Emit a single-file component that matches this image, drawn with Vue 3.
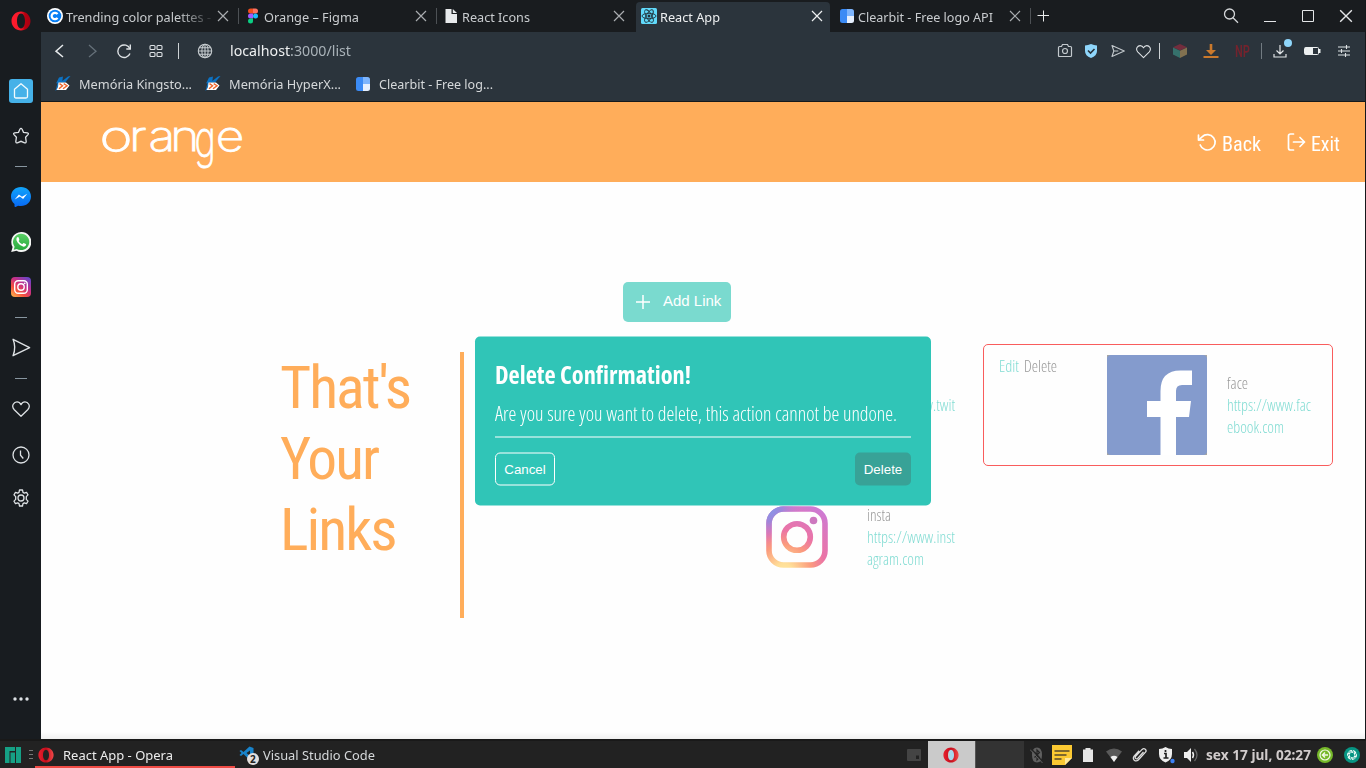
<script setup>
const tabs = [
  { title: 'Trending color palettes -', icon: 'coolors', w: 145, fade: true },
  { title: 'Orange – Figma', icon: 'figma', w: 95 },
  { title: 'React Icons', icon: 'page', w: 68 },
  { title: 'React App', icon: 'react', w: 60, active: true },
  { title: 'Clearbit - Free logo API', icon: 'clearbit', w: 135 },
]
const bookmarks = [
  { title: 'Memória Kingsto...', icon: 'kabum', w: 113 },
  { title: 'Memória HyperX...', icon: 'kabum', w: 112 },
  { title: 'Clearbit - Free log...', icon: 'clearbit', w: 114 },
]
const sidebar = [
  ['opera', 20, 42], ['', 0, 27], ['home', 24, 44], ['star', 18, 46], ['dash', 12, 14],
  ['messenger', 20, 48], ['whatsapp', 20, 42], ['instagram', 20, 47], ['dash', 12, 14],
  ['send', 19, 47], ['dash', 12, 14], ['heart', 18, 47], ['clock', 18, 45], ['gear', 18, 42],
  ['', 0, 158], ['dots', 18, 44],
]

// Scales a line of text horizontally so that it takes the given width.
const vFit = {
  mounted(el, { value }) {
    if (!value) return
    const natural = el.getBoundingClientRect().width
    el.style.transform = `scaleX(${value / natural})`
    el.style.marginRight = `${value - natural}px`
  },
}
</script>

<template>
  <div class="screen">
    <svg class="defs" width="0" height="0">
      <defs>
        <linearGradient id="opera-g" x1="0" x2="1"><stop offset="0" stop-color="#ff1b2d" /><stop offset=".5" stop-color="#f5192b" /><stop offset=".7" stop-color="#b8000f" /><stop offset="1" stop-color="#a70014" /></linearGradient>
        <linearGradient id="opera-t" x1="0" x2="1"><stop offset="0" stop-color="#e8202e" /><stop offset=".5" stop-color="#c50c1b" /><stop offset="1" stop-color="#ef4a4a" /></linearGradient>
        <linearGradient id="blue-g" x1="0" y1="0" x2="0" y2="1"><stop offset="0" stop-color="#12a5fa" /><stop offset="1" stop-color="#0768f5" /></linearGradient>
        <linearGradient id="wa-g" x1="0" y1="0" x2="0" y2="1"><stop offset="0" stop-color="#5bd066" /><stop offset="1" stop-color="#27a93c" /></linearGradient>
        <linearGradient id="ig-g" x1="0" y1="1" x2=".8" y2="0"><stop offset="0" stop-color="#fdc04f" /><stop offset=".35" stop-color="#f5513f" /><stop offset=".65" stop-color="#c62f88" /><stop offset="1" stop-color="#6b45c6" /></linearGradient>
        <radialGradient id="ig-page" gradientUnits="userSpaceOnUse" cx="18" cy="66" r="72"><stop offset="0" stop-color="#ffe6a0" /><stop offset=".12" stop-color="#ffdf98" /><stop offset=".38" stop-color="#fb9b7d" /><stop offset=".58" stop-color="#eb74a6" /><stop offset="1" stop-color="#cd7ad4" /></radialGradient>
        <radialGradient id="ig-blue" gradientUnits="userSpaceOnUse" cx="2" cy="2" r="34"><stop offset="0" stop-color="#7f9aec" /><stop offset=".4" stop-color="#9489e0" stop-opacity=".85" /><stop offset="1" stop-color="#cd7ad4" stop-opacity="0" /></radialGradient>
      </defs>
      <symbol id="opera" viewBox="0 0 20 20"><path fill="url(#opera-g)" fill-rule="evenodd" d="M10 .5c5.3 0 9.5 4.2 9.5 9.5s-4.200 9.500-9.500 9.500S.5 15.300.5 10 4.700.5 10 .5zm0 2.100c-2.500 0-4 3.300-4 7.400s1.500 7.400 4 7.400 4-3.300 4-7.400-1.500-7.400-4-7.400z" /></symbol>
      <symbol id="opera-task" viewBox="0 0 20 20"><path fill="url(#opera-t)" fill-rule="evenodd" d="M10 .5c5.300 0 9.500 4.200 9.500 9.500s-4.200 9.500-9.500 9.500S.5 15.300.5 10 4.700.5 10 .5zm0 2.800c-2.300 0-3.800 2.800-3.800 6.700s1.500 6.700 3.800 6.700 3.800-2.800 3.800-6.700S12.300 3.300 10 3.300z" /></symbol>
      <symbol id="home" viewBox="0 0 24 24"><rect width="24" height="24" rx="3" fill="#45b1e8" /><path d="M5.500 10.300 12 4.700l6.500 5.600v7.200q0 1.500-1.500 1.500H7q-1.500 0-1.500-1.500z" fill="none" stroke="#f2fafd" stroke-width="1.300" stroke-linejoin="round" /></symbol>
      <symbol id="star" viewBox="0 0 18 18"><path d="M9 1.300q.7 0 1 .8l1.500 3.200 3.900.6q1.700.4.600 1.700l-2.400 2.700.6 4.300q0 1.800-1.600 1.200L9 14.300l-3.600 1.500q-1.600.6-1.600-1.200l.6-4.300L2 7.600Q.9 6.300 2.600 5.900l3.900-.6L8 2.100q.3-.8 1-.8z" fill="none" stroke="#dde1e4" stroke-width="1.300" /></symbol>
      <symbol id="dash" viewBox="0 0 12 2"><path d="M0 1.500h12" stroke="#8896a0" /></symbol>
      <symbol id="messenger" viewBox="0 0 20 20"><path fill="url(#blue-g)" d="M10 0c5.700 0 10 4 10 9.600s-4.300 9.500-10 9.500q-1.500 0-2.900-.4L4.500 20q-1 .1-1-1v-1.900C1.200 15.200 0 12.700 0 9.600 0 4 4.300 0 10 0z" /><path fill="#fff" d="m3.700 12.500 4.200-5.100 3.100 2.300 5.200-3-4.100 5.200-3.200-2.300z" /></symbol>
      <symbol id="whatsapp" viewBox="0 0 20 20"><path fill="#f4f6f4" d="M10 0a10 10 0 1 1-4.500 18.700L.2 20l1.400-5A10 10 0 0 1 10 0z" /><path fill="url(#wa-g)" d="M10 1.700a8.200 8.200 0 1 1-4.200 15.200l-3 .8.800-3A8.200 8.200 0 0 1 10 1.700z" /><path fill="#fff" d="M7 5q-.8 0-1.400 1-1 2 1 4.500 2.400 3.500 5.900 4.300 2 0 2.600-1.800.2-.8-.2-1l-2.200-1q-.4 0-1.200 1.100-.3.200-.7 0Q8.600 11 7.600 9q.9-1 .7-1.500L7.500 5.300Q7.400 5 7 5z" /></symbol>
      <symbol id="instagram" viewBox="0 0 20 20"><rect width="20" height="20" rx="4" fill="url(#ig-g)" /><rect x="3.700" y="3.700" width="12.600" height="12.600" rx="3.500" fill="none" stroke="#fff" stroke-width="1.400" /><circle cx="10" cy="10" r="3.200" fill="none" stroke="#fff" stroke-width="1.400" /><circle cx="13.700" cy="6.300" r=".9" fill="#fff" /></symbol>
      <symbol id="send" viewBox="0 0 18 18"><path d="m1 1.200 15.700 7.900L1 16.800Q4.200 9 1 1.200z" fill="none" stroke="#dde1e4" stroke-width="1.300" stroke-linejoin="round" /></symbol>
      <symbol id="heart" viewBox="0 0 18 18"><path d="M9 16.300 2.300 9.700C-1.400 5.600 2.300 1.900 5 1.900q2.600 0 4 2.700 1.400-2.700 4-2.700c2.700 0 6.400 3.700 2.700 7.800z" fill="none" stroke="#dde1e4" stroke-width="1.300" stroke-linejoin="round" /></symbol>
      <symbol id="clock" viewBox="0 0 18 18"><g fill="none" stroke="#dde1e4" stroke-width="1.300"><circle cx="9" cy="9" r="8" /><path d="M8.500 4.500V9.200l2.800 3.300" /></g></symbol>
      <symbol id="gear" viewBox="0 0 18 18"><g fill="none" stroke="#dde1e4" stroke-width="1.300" stroke-linejoin="round"><circle cx="9" cy="9" r="3" /><path d="m7.500 1 3 0 .5 2.400 1.300.7 2.200-.8L16 5.900l-1.700 1.700v2.800l1.700 1.700-1.500 2.600-2.200-.8-1.300.7-.5 2.400h-3L7 14.600l-1.300-.7-2.200.8L2 12.100l1.700-1.700V7.600L2 5.900l1.500-2.600 2.200.8L7 3.400z" /></g></symbol>
      <symbol id="dots" viewBox="0 0 18 18"><g fill="#dde1e4"><circle cx="3" cy="9" r="1.700" /><circle cx="9" cy="9" r="1.700" /><circle cx="15" cy="9" r="1.700" /></g></symbol>
      <symbol id="coolors" viewBox="0 0 16 16"><circle cx="8" cy="8" r="8" fill="#fff" /><circle cx="8" cy="8" r="6.300" fill="#087ff5" /><path d="M10.500 9.800a3.200 3.200 0 1 1 0-3.600" stroke="#fff" stroke-width="2.200" fill="none" /></symbol>
      <symbol id="figma" viewBox="0 0 16 16"><path fill="#f24e1e" d="M5.500.5H8v5H5.500a2.500 2.500 0 0 1 0-5z" /><path fill="#ff7262" d="M8 .5h2.500a2.500 2.500 0 0 1 0 5H8z" /><path fill="#a259ff" d="M5.500 5.500H8v5H5.500a2.500 2.500 0 0 1 0-5z" /><circle cx="10.500" cy="8" r="2.500" fill="#1abcfe" /><path fill="#0acf83" d="M5.500 10.500H8V13a2.500 2.500 0 1 1-2.500-2.500z" /></symbol>
      <symbol id="page" viewBox="0 0 16 16"><path fill="#e8eaec" d="M2.500 1h6v5H14v9H2.500zM9.800 1 14 5H9.800z" /></symbol>
      <symbol id="react" viewBox="0 0 16 16"><rect width="16" height="16" rx="1.500" fill="#61dafb" /><g fill="none" stroke="#20313b" stroke-width=".9"><ellipse cx="8" cy="8" rx="7" ry="2.700" /><ellipse cx="8" cy="8" rx="7" ry="2.700" transform="rotate(60 8 8)" /><ellipse cx="8" cy="8" rx="7" ry="2.700" transform="rotate(120 8 8)" /></g><circle cx="8" cy="8" r="1.500" fill="#20313b" /></symbol>
      <symbol id="clearbit" viewBox="0 0 16 16"><path fill="#3b8bf5" d="M8 1v14H3.500Q1 15 1 12.500v-9Q1 1 3.500 1z" /><path fill="#7db5fd" d="M8 1h4.500Q15 1 15 3.500V8H8z" /><path fill="#e6f0fe" d="M8 8h7v4.500q0 2.500-2.500 2.500H8z" /></symbol>
      <symbol id="kabum" viewBox="0 0 16 16"><path fill="#0c72c4" d="M4 1.500 8 .5 7.300 5 13 .5l2.500-.5L10 6.500H4.500L2 13.500.5 15l2-8L1 7.500z" /><path fill="#fff" d="M3.500 6.500h7.500l3.500 3-3.500 4.500H1.500L3 11z" /><path d="m4.500 7.700 3 2-3.500 3M8.700 7.700l3.300 2-4 3" fill="none" stroke="#ef6428" stroke-width="1.400" /></symbol>
      <symbol id="x" viewBox="0 0 12 12"><path d="m1 1 10 10M11 1 1 11" stroke="currentColor" stroke-width="1.200" /></symbol>
    </svg>

    <div class="upper">
      <nav class="side">
        <div v-for="(s, i) in sidebar" :key="i" class="slot" :style="{ height: s[2] + 'px' }">
          <svg v-if="s[0]" :width="s[1]" :height="s[0] === 'dash' ? 2 : s[1]"><use :href="'#' + s[0]" /></svg>
        </div>
      </nav>

      <div class="browser">
        <div class="tabbar">
          <div v-for="t in tabs" :key="t.title" class="tab" :class="{ active: t.active }">
            <svg width="16" height="16"><use :href="'#' + t.icon" /></svg>
            <div class="tab-title" :class="{ fade: t.fade }"><span v-fit="t.w" class="fit">{{ t.title }}</span></div>
            <svg class="close" width="12" height="12"><use href="#x" /></svg>
          </div>
          <svg class="plus" width="12" height="12" viewBox="0 0 12 12"><path d="M6.500 .5v11M.5 5.500h12" stroke="#e9ebec" /></svg>
          <div class="window">
            <svg width="16" height="16" viewBox="0 0 16 16"><g fill="none" stroke="#d5d8da" stroke-width="1.300"><circle cx="6.500" cy="6" r="5" /><path d="m10 9.800 5 5" /></g></svg>
            <svg width="12" height="14" viewBox="0 0 12 14"><path d="M0 12.500h12" stroke="#e4e6e8" /></svg>
            <svg width="12" height="12" viewBox="0 0 12 12"><path d="M.5.5h11v11H.5z" fill="none" stroke="#e4e6e8" /></svg>
            <svg class="quit" width="14" height="14"><use href="#x" /></svg>
          </div>
        </div>

        <div class="toolbar">
          <div class="tools-left">
            <svg width="16" height="16" viewBox="0 0 16 16"><path d="m11 2-7 6.200L11 14" fill="none" stroke="#e6e9eb" stroke-width="1.500" /></svg>
            <svg width="16" height="16" viewBox="0 0 16 16"><path d="m5 2 7 6.200L5 14" fill="none" stroke="#657079" stroke-width="1.300" /></svg>
            <svg width="16" height="16" viewBox="0 0 16 16"><g fill="none" stroke="#dde1e4" stroke-width="1.400"><path d="M14 6A6.300 6.300 0 1 0 14 10.500" /><path d="M14.300 1.500V6h-4" /></g></svg>
            <svg width="16" height="16" viewBox="0 0 16 16"><g fill="none" stroke="#dde1e4" stroke-width="1.100"><rect x="2" y="2.500" width="5" height="4" rx="1" /><rect x="9" y="2.500" width="5" height="4" rx="1" /><rect x="2" y="9.500" width="5" height="4" rx="1" /><rect x="9" y="9.500" width="5" height="4" rx="1" /></g></svg>
            <i class="bar"></i>
            <svg width="16" height="16" viewBox="0 0 16 16"><g fill="none" stroke="#c6cccf" stroke-width="1.100"><circle cx="8" cy="8" r="6.700" /><ellipse cx="8" cy="8" rx="3.100" ry="6.700" /><path d="M8 1.300v13.400M1.300 8h13.400M2.200 4.800h11.600M2.200 11.200h11.600" /></g></svg>
          </div>
          <div class="url"><span v-fit="121" class="fit">localhost<em>:3000/list</em></span></div>
          <div class="tools-right">
            <svg width="16" height="16" viewBox="0 0 16 16"><g fill="none" stroke="#c3c9cd" stroke-width="1.200"><path d="M2.500 3.500h2l1-2h5l1 2h2q1 0 1 1v8q0 1-1 1h-11q-1 0-1-1v-8q0-1 1-1z" /><circle cx="8" cy="8" r="2.500" /></g></svg>
            <svg width="16" height="16" viewBox="0 0 16 16"><path fill="#8fd6fb" d="M8 1q3 1.300 6 1.500v5.500q0 5-6 7-6-2-6-7V2.500Q5 2.300 8 1z" /><path d="m5 7.500 2.500 2.500L11.500 6" fill="none" stroke="#283139" stroke-width="1.600" /></svg>
            <svg width="14" height="14" viewBox="0 0 14 14"><path d="M1 1.500 13.300 7 1 12.500 2.800 7zM2.800 7h4.500" fill="none" stroke="#c3c9cd" stroke-width="1.100" stroke-linejoin="round" /></svg>
            <svg width="15" height="15"><use href="#heart" /></svg>
            <i class="bar"></i>
            <svg width="16" height="16" viewBox="0 0 16 16"><path fill="#732d3d" d="m8 1 7 3.300-7 3.200-7-3.200z" /><path fill="#36716c" d="m1 4.500 7 3.200V15l-7-3.500z" /><path fill="#817150" d="m15 4.500-7 3.200V15l7-3.500z" /></svg>
            <svg width="16" height="16" viewBox="0 0 16 16"><path fill="#ca792c" d="M6.700 1h2.600v6H13l-5 5-5-5h3.700zM.5 13h15v2H.5z" /></svg>
            <span class="np"><span v-fit="15" class="fit">NP</span></span>
            <i class="bar dim"></i>
            <span class="download"><svg width="16" height="16" viewBox="0 0 16 16"><path d="M8 2v9M4.500 7.500 8 11l3.500-3.500M2 11v3h12v-3" fill="none" stroke="#e1e5e7" stroke-width="1.200" /></svg><b></b></span>
            <svg width="17" height="10" viewBox="0 0 17 10"><path d="M1.500 1.500h12q1 0 1 1v5q0 1-1 1h-12q-1 0-1-1v-5q0-1 1-1z" fill="none" stroke="#eceff0" /><path fill="#eceff0" d="M1 1.500h8v7H1zM15 3h1.500v4H15z" /></svg>
            <svg width="14" height="14" viewBox="0 0 14 14"><path d="M1 3h12M1 7h12M1 11h12M9.500 1v4M4.500 5v4M8.500 9v4" stroke="#dce1e3" stroke-width="1.100" /></svg>
          </div>
        </div>

        <div class="bookmarks">
          <div v-for="b in bookmarks" :key="b.title" class="bookmark">
            <svg width="16" height="16"><use :href="'#' + b.icon" /></svg>
            <span v-fit="b.w" class="fit">{{ b.title }}</span>
          </div>
        </div>

        <main class="page">
          <header class="header">
            <svg class="brand" width="150" height="70" viewBox="0 0 150 70">
              <text transform="translate(5.500 42) scale(1.180 1)"><tspan textLength="28" lengthAdjust="spacingAndGlyphs">o</tspan><tspan x="25" textLength="15" lengthAdjust="spacingAndGlyphs">r</tspan><tspan x="41.500">a</tspan><tspan x="60">n</tspan><tspan x="80.500" dy="6" font-size="50" textLength="18" lengthAdjust="spacingAndGlyphs">g</tspan><tspan x="98.500" dy="-6">e</tspan></text>
            </svg>
            <div class="actions">
              <svg width="20" height="20" viewBox="0 0 20 20"><g fill="none" stroke="#fff" stroke-width="1.700" stroke-linecap="round" stroke-linejoin="round"><path d="M1.500 3v5h5" /><path d="M1.800 7.800 5 4.800A7.700 7.700 0 1 1 3.200 13" /></g></svg>
              <span v-fit="39" class="fit">Back</span>
              <svg class="exit" width="20" height="20" viewBox="0 0 20 20"><g fill="none" stroke="#fff" stroke-width="1.700" stroke-linecap="round" stroke-linejoin="round"><path d="M7.500 2h-3Q2.500 2 2.500 4v12q0 2 2 2h3M7.500 10h11M14 5.500l4.500 4.500-4.500 4.500" /></g></svg>
              <span v-fit="29" class="fit">Exit</span>
            </div>
          </header>

          <div class="content">
            <section class="intro">
              <h1><span v-fit="130" class="fit">That's</span><span v-fit="98" class="fit">Your</span><span v-fit="115.500" class="fit">Links</span></h1>
            </section>
            <section class="links">
              <button class="add">
                <svg width="16" height="16" viewBox="0 0 16 16"><path d="M8 1v14M1 8h14" stroke="#fff" stroke-width="1.500" /></svg>
                <span>Add Link</span>
              </button>
              <div class="cards">
                <article class="card">
                  <div class="ops"></div><div class="pic"></div>
                  <div class="info"><p class="link second"><span v-fit="88" class="fit">https://www.twit</span></p></div>
                </article>
                <article class="card selected">
                  <div class="ops"><span v-fit="20" class="fit edit">Edit</span><span v-fit="33" class="fit">Delete</span></div>
                  <svg class="pic" viewBox="0 0 100 100"><path fill="#aaa79f" d="M0 0h100v100H0z" /><rect width="100" height="100" rx="4" fill="#849bcd" /><path fill="#fff" d="M53.500 100V62H40V46h13.500V36q0-20.500 20-20.500H85V30H75q-6 0-6 6v10h15l-2 16H69v38z" /></svg>
                  <div class="info"><p><span v-fit="21" class="fit">face</span></p><p class="link"><span v-fit="84" class="fit">https://www.fac</span></p><p class="link"><span v-fit="57" class="fit">ebook.com</span></p></div>
                </article>
                <article class="card">
                  <div class="ops"></div>
                  <svg class="pic" viewBox="-19 -19 100 100"><g fill="none" stroke="url(#ig-page)" stroke-width="5.600"><rect x="3" y="3" width="56" height="56" rx="14.500" /><circle cx="31" cy="31" r="13.300" /></g><circle cx="47.500" cy="14.500" r="3.800" fill="#cd78bf" /><rect x="3" y="3" width="56" height="56" rx="14.500" fill="none" stroke="url(#ig-blue)" stroke-width="5.600" /></svg>
                  <div class="info"><p><span v-fit="24" class="fit">insta</span></p><p class="link"><span v-fit="88" class="fit">https://www.inst</span></p><p class="link"><span v-fit="57" class="fit">agram.com</span></p></div>
                </article>
              </div>
            </section>
          </div>

          <div class="modal">
            <h2><span v-fit="196" class="fit">Delete Confirmation!</span></h2>
            <p><span v-fit="402" class="fit">Are you sure you want to delete, this action cannot be undone.</span></p>
            <div class="buttons"><button class="cancel">Cancel</button><button class="delete">Delete</button></div>
          </div>
        </main>
      </div>
    </div>

    <footer class="taskbar">
      <svg class="manjaro" width="16" height="16" viewBox="0 0 16 16"><path fill="#16a085" d="M0 0h10v4H4.500v12H0zM5.500 5.500H10V16H5.500zM11 0h5v16h-5z" /></svg>
      <svg class="grip" width="4" height="12" viewBox="0 0 4 12"><path d="M0 1.500h4M0 5.500h4M0 9.500h4" stroke="#777" /></svg>
      <div class="task current"><svg width="16" height="16"><use href="#opera-task" /></svg><span v-fit="110" class="fit">React App - Opera</span></div>
      <div class="task">
        <svg width="20" height="20" viewBox="0 0 20 20"><path fill="#1883cb" d="M10.500 1.500 14.500 3v11L11 15.500 4.500 9 2 11 .5 10l2-2-2-2L2 5l2.500 2zM11 5.500 7.500 8l3.500 3z" fill-rule="evenodd" /><circle cx="14" cy="14" r="6" fill="#e3dfdf" /><text x="11.100" y="18" class="count">2</text></svg>
        <span v-fit="112" class="fit">Visual Studio Code</span>
      </div>
      <div class="workspaces">
        <svg width="14" height="12" viewBox="0 0 14 12"><rect width="14" height="12" rx="1" fill="#444" /><path fill="#222" d="M9 6.500h3V10H9z" /></svg>
        <div class="ws on"><svg width="16" height="16" viewBox="0 0 20 20"><ellipse cx="10" cy="10" rx="5" ry="7.500" fill="#a6d8ec" /><path fill="#c9c9c9" d="M6 5.500 9 10l-3 4.500z" /><use href="#opera-task" width="20" height="20" /></svg></div>
        <div class="ws"></div>
      </div>
      <div class="tray">
        <svg width="14" height="16" viewBox="0 0 14 16"><path fill="#606060" d="M7 .5q5 0 5 7.500t-5 7.500T2 8 7 .5z" /><path d="m4.500 5 5 5.500L7 13V3l2.500 2.500-5 5M.5 1 13 15" stroke="#242424" stroke-width="1.200" fill="none" /><path d="M0 2.500 12.500 16" stroke="#606060" /></svg>
        <svg width="20" height="20" viewBox="0 0 20 20"><path fill="#fbc932" d="M0 0h20v13l-7 7H0z" /><path fill="#ffe89a" d="M13 13h7l-7 7z" /><path d="M2.500 6h15M2.500 10h12M2.500 14h7" stroke="#55482c" stroke-width="1.600" /></svg>
        <svg width="10" height="14" viewBox="0 0 10 14"><path fill="#e6e6e6" d="M0 1.500h2.500V0h5v1.500H10V14H0z" /></svg>
        <svg width="16" height="14" viewBox="0 0 16 14"><path fill="#595959" d="M0 3.500q8-6 16 0L8 14z" /><path fill="#eee" d="M4.500 9Q8 6.300 11.500 9L8 14z" /></svg>
        <svg width="16" height="16" viewBox="0 0 16 16"><path d="m11.500 5-5.800 6.400q-1.200 1-2.200 0-.8-1 .2-2l6.400-7q1.600-1.400 3.200-.2 1.500 1.300.2 3L6.300 13q-2 1.700-4 .2-1.800-1.800-.2-4l5-5.500" fill="none" stroke="#dedede" stroke-width="1.300" /></svg>
        <svg width="18" height="18" viewBox="0 0 18 18"><path fill="#eee" d="M8.500 1q3 2 6.500 2v5q0 6-6.500 8.500Q2 14 2 8V3q3.500 0 6.500-2z" /><path d="M7 7.500h2V12M6.500 12h5M8.500 4v2" stroke="#222" stroke-width="1.700" fill="none" /><circle cx="15.500" cy="15" r="2.200" fill="#3d81f6" /></svg>
        <svg width="16" height="16" viewBox="0 0 16 16"><path fill="#eee" d="M1 5h3l4-4v14l-4-4H1z" /><path d="M9.500 5q2 3 0 6" fill="none" stroke="#eee" stroke-width="1.500" /><path d="M11.500 2q5 6 0 12" fill="none" stroke="#666" stroke-width="1.300" /></svg>
      </div>
      <div class="date"><span v-fit="105" class="fit">sex 17 jul, 02:27</span></div>
      <svg class="round" width="16" height="16" viewBox="0 0 16 16"><circle cx="8" cy="8" r="8" fill="#76b82a" /><circle cx="8" cy="8" r="5" fill="none" stroke="#f2f8e8" stroke-width="1.200" /><path d="M11 8H6M8 5.500 5.500 8 8 10.500" stroke="#f2f8e8" stroke-width="1.500" fill="none" /></svg>
      <svg class="round last" width="16" height="16" viewBox="0 0 16 16"><circle cx="8" cy="8" r="8" fill="#079583" /><circle cx="8" cy="8" r="3.700" fill="none" stroke="#eefbf8" stroke-width="2.700" /><path d="m8 2.500 2 3.500M12.800 5.500l-2 3.500M12.500 11h-4M8 13.500 6 10M3 10.500 5.200 7M3.500 5h4" stroke="#079583" stroke-width=".9" /></svg>
    </footer>
  </div>
</template>

<style>
html, body { margin: 0; overflow: hidden; background: #181b1f; }
</style>

<style scoped>
.screen { width: 1366px; height: 768px; overflow: hidden; display: flex; flex-direction: column; font: 13.33px/20px "Noto Sans", sans-serif; color: #d5d8da; background: #181b1f; }
.screen * { box-sizing: border-box; }
.defs { position: absolute; }
svg { display: block; flex: none; }
.fit { display: inline-block; white-space: nowrap; transform-origin: 0 50%; flex: none; }
.upper { display: flex; height: 739px; }
.side { width: 41px; flex: none; background: #181c20; }
.slot { display: flex; align-items: center; justify-content: center; padding-left: 1px; }
.browser { width: 1325px; display: flex; flex-direction: column; border-right: 1px solid #15181b; }
.tabbar { height: 32px; display: flex; align-items: stretch; background: #191c1f; margin-left: -1px; padding-right: 12px; }
.tab { width: 198px; display: flex; align-items: center; padding-left: 7px; border-right: 1px solid transparent; position: relative; }
.tab::after { content: ""; position: absolute; right: -2px; top: 8px; width: 1px; height: 16px; background: #4d5155; }
.tab:nth-child(3)::after, .tab.active::after { display: none; }
.tab-title { width: 147px; margin-left: 3px; white-space: nowrap; color: #c9cccf; padding-top: 2px; }
.fade { -webkit-mask-image: linear-gradient(90deg, #000 112px, transparent 150px); mask-image: linear-gradient(90deg, #000 112px, transparent 150px); }
.close { color: #a9adb0; margin-left: 3.5px; }
.active { background: #2b343c; width: 194px; margin: 2px 2px 0; border-radius: 4px 4px 0 0; border: 0; padding: 0 0 2px 5px; }
.active .tab-title { color: #eef0f1; }
.active .close { color: #eef0f1; }
.plus { align-self: center; margin-left: 7px; }
.window { margin-left: auto; display: flex; align-items: center; gap: 26px; }
.window svg:first-child { margin-right: -1px; }
.quit { color: #e4e6e8; margin-left: -1px; }
.toolbar { height: 38px; background: #2b343c; display: flex; align-items: center; }
.tools-left { display: grid; grid-template-columns: 32px 32px 32px 32px 13px 40px; padding-left: 3px; }
.tools-left, .tools-right { justify-items: center; align-items: center; }
.bar { width: 1px; height: 16px; background: #cdd2d5; }
.dim { background: #727b82; }
.url { font-size: 14px; margin-left: 5px; color: #eef0f1; }
.url em { font-style: normal; color: #a9b2b8; }
.tools-right { margin-left: auto; display: grid; grid-template-columns: 26px 26px 28px 22px 11px 30px 32px 30px 9px 28px 36px 28px; padding-right: 7px; }
.np { font: 500 17px/18px "Roboto Condensed", Roboto, sans-serif; font-stretch: 75%; color: #74232d; width: 15px; }
.download { position: relative; }
.download b { position: absolute; right: -4px; top: -4px; width: 8px; height: 8px; border-radius: 50%; background: #8fd6fb; }
.bookmarks { height: 32px; background: #2b343c; border-bottom: 1px solid #15191c; display: flex; padding: 0 0 3px 14px; }
.bookmark { width: 150px; display: flex; align-items: center; gap: 8px; }
.page { position: relative; height: 637px; background: linear-gradient(#fefefe 630px, #f0f0f0 637px); }
.header { height: 80px; background: #ffad5a; display: flex; align-items: center; justify-content: space-between; padding: 0 25px 0 53px; }
.brand { margin-top: 4px; overflow: visible; }
.brand text { font-family: Inter, sans-serif; font-size: 42px; font-weight: 200; fill: #fff; stroke: #fff; stroke-width: .8px; }
.actions { display: flex; align-items: center; color: #fff; font: 20px/24px "Roboto Condensed", Roboto, sans-serif; font-stretch: 75%; padding-top: 4px; }
.actions svg { margin: -4px 5px 0 0; }
.actions .exit { margin-left: 25px; }
.content { display: flex; padding-left: 239px; }
.intro { width: 184px; height: 266px; margin-top: 170px; border-right: 4px solid #ffad5a; }
h1 { margin: 0; font: 400 60px/71px "Roboto Condensed", Roboto, sans-serif; font-stretch: 75%; letter-spacing: -2px; color: #ffad5a; display: flex; flex-direction: column; align-items: flex-start; }
.links { margin-left: 159px; padding-top: 100px; }
.add { width: 108px; height: 40px; border: 0; border-radius: 5px; background: #7adacf; color: #fff; display: flex; align-items: center; padding: 0 0 0 12px; font: 15px/18px "Liberation Sans", Arial, sans-serif; }
.add span { margin: -3px 0 0 12px; white-space: nowrap; }
.cards { margin-top: 22px; display: grid; grid-template-columns: 350px 350px; gap: 10px; font: 300 16px/22px "Open Sans", sans-serif; font-stretch: 75%; color: #999; }
.card { height: 122px; border: 1px solid transparent; border-radius: 5px; padding: 10px 15px; display: flex; }
.selected { border-color: #f95d5d; }
.ops { width: 108px; display: flex; gap: 5px; }
.edit, .link { color: #82dcd3; }
.second { padding-top: 22px; }
.pic { width: 100px; height: 100px; flex: none; }
.info { margin-left: 20px; padding-top: 17px; width: 89px; }
p { margin: 0; }
.modal { position: absolute; left: 434px; top: 235px; transform: translateY(-.5px); width: 456px; height: 169px; background: #30c5b7; border-radius: 5px; padding: 20px; color: #fff; font-family: "Open Sans", sans-serif; font-stretch: 75%; }
h2 { margin: 0; font-size: 24px; line-height: 36px; font-weight: 700; }
.modal p { font-size: 20px; font-weight: 300; line-height: 42px; height: 45px; border-bottom: 1px solid #fff; color: #fff; }
.buttons { display: flex; justify-content: space-between; margin-top: 15px; }
.buttons button { height: 33px; border-radius: 5px; font: 13.333px "Liberation Sans", Arial, sans-serif; color: #fff; padding: 0; }
.cancel { width: 60px; background: none; border: 1px solid #fff; }
.delete { width: 56px; background: #38a297; border: 0; }
.taskbar { height: 29px; border-top: 2px solid #191919; background: #222; display: flex; align-items: center; }
.manjaro { margin-left: 5px; }
.grip { margin-left: 8px; }
.task { width: 200px; height: 27px; margin-left: 2px; display: flex; align-items: center; padding: 0 0 0 3px; }
.task + .task { margin-left: 1px; }
.task .fit { margin-left: 9px; }
.task + .task .fit { margin-left: 4px; }
.current { color: #ececec; padding-top: 2px; border-bottom: 2px solid #f04b45; }
.count { font: bold 10px "Noto Sans", sans-serif; fill: #222; }
.workspaces { margin-left: auto; display: flex; align-items: center; }
.ws { width: 48px; height: 27px; background: #333; display: flex; align-items: center; justify-content: center; }
.on { background: #cacaca; margin-left: 7px; padding-right: 2px; border-right: 1px solid #555; }
.tray { display: grid; grid-template-columns: 18px 32px 20px 32px 20px 32px 18px; justify-items: center; align-items: center; margin-left: 4px; }
.date { width: 105px; margin-left: 6px; font-weight: 700; color: #d1cccc; }
.round { margin-left: 6px; }
.last { margin: 0 6px 0 11px; }
</style>
